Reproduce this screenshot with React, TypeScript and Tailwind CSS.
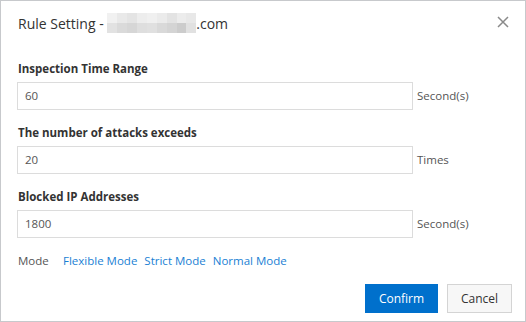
const blurTop = ['#f1f1f1', '#e9e9e9', '#e4e4e4', '#ededed', '#f0f0f0', '#ebebeb', '#e3e3e3', '#ececec', '#e8e8e8'];
const blurBottom = ['#e2e2e2', '#dadada', '#d6d6d6', '#dedede', '#e0e0e0', '#d9d9d9', '#d4d4d4', '#cccccc', '#e1e1e1'];

const fields = [
  { label: 'Inspection Time Range', value: '60', unit: 'Second(s)' },
  { label: 'The number of attacks exceeds', value: '20', unit: 'Times' },
  { label: 'Blocked IP Addresses', value: '1800', unit: 'Second(s)' },
];

const App = () => {
  return (
    <div
      className="w-[526px] h-[322px] bg-white border border-[#c7c9cc] flex flex-col text-[#333]"
      style={{ fontFamily: '"Open Sans", "Noto Sans", Arial, sans-serif' }}
    >
      {/* header */}
      <div className="h-[44px] flex items-center justify-between pl-[17px] pr-[16px]">
        <div className="flex items-center text-[14px] text-[#333]">
          <span>Rule Setting -&nbsp;</span>
          <span className="grid grid-cols-9 w-[89px] h-[20px]">
            {blurTop.map((c, i) => (
              <span key={'t' + i} style={{ backgroundColor: c }} />
            ))}
            {blurBottom.map((c, i) => (
              <span key={'b' + i} style={{ backgroundColor: c }} />
            ))}
          </span>
          <span>.com</span>
        </div>
        <svg width="12" height="12" viewBox="0 0 12 12" className="mt-[-2px]">
          <path d="M1 1 L11 11 M11 1 L1 11" stroke="#8a8a8a" strokeWidth="1.5" />
        </svg>
      </div>

      {/* body */}
      <div className="flex flex-col px-[16px] pt-[15px]">
        {fields.map((f, i) => (
          <div key={f.label} className={i > 0 ? 'mt-[14px]' : ''}>
            <div className="text-[11.5px] font-bold leading-[18px] mb-[4px] text-[#333] pl-[1px]">{f.label}</div>
            <div className="flex items-center">
              <div className="w-[396px] h-[28px] border border-[#dcdcdc] flex items-center px-[7px] text-[11.5px] text-[#555]">
                {f.value}
              </div>
              <span className="ml-[4px] text-[11.5px] text-[#555]">{f.unit}</span>
            </div>
          </div>
        ))}

        <div className="mt-[14px] h-[18px] flex items-center text-[11.5px] pl-[1px]">
          <span className="w-[45px] text-[#555]">Mode</span>
          <div className="flex gap-[7px] text-[#1a7fd4]">
            <span>Flexible Mode</span>
            <span>Strict Mode</span>
            <span>Normal Mode</span>
          </div>
        </div>

        <div className="mt-[14px] flex justify-end gap-[9px] mr-[-3px]">
          <button className="w-[73px] h-[29px] bg-[#0070cc] text-white text-[12px]">Confirm</button>
          <button className="w-[65px] h-[29px] bg-[#f7f7f7] border border-[#d4d4d4] text-[#333] text-[12px]">Cancel</button>
        </div>
      </div>
    </div>
  );
};

export default App;
